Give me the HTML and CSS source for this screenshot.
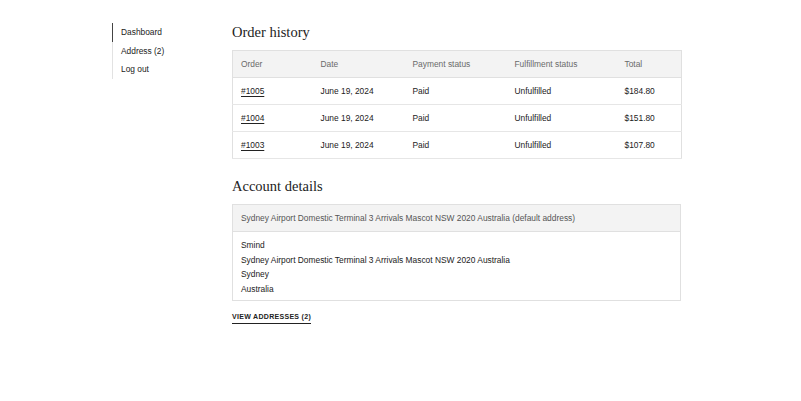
FILE: index.html
```html
<!DOCTYPE html>
<html>
<head>
<meta charset="utf-8">
<link rel="stylesheet" href="styles.css">
</head>
<body>
<div class="page">
  <nav class="side">
    <a class="side-link active" href="#">Dashboard</a>
    <a class="side-link" href="#">Address (2)</a>
    <a class="side-link" href="#">Log out</a>
  </nav>
  <main class="main">
    <h2 class="title">Order history</h2>
    <table class="orders">
      <colgroup>
        <col class="c1"><col class="c2"><col class="c3"><col class="c4"><col class="c5">
      </colgroup>
      <thead>
        <tr><th>Order</th><th>Date</th><th>Payment status</th><th>Fulfillment status</th><th>Total</th></tr>
      </thead>
      <tbody>
        <tr><td><a href="#">#1005</a></td><td>June 19, 2024</td><td>Paid</td><td>Unfulfilled</td><td>$184.80</td></tr>
        <tr><td><a href="#">#1004</a></td><td>June 19, 2024</td><td>Paid</td><td>Unfulfilled</td><td>$151.80</td></tr>
        <tr><td><a href="#">#1003</a></td><td>June 19, 2024</td><td>Paid</td><td>Unfulfilled</td><td>$107.80</td></tr>
      </tbody>
    </table>
    <h2 class="title title-2">Account details</h2>
    <div class="card">
      <div class="card-head">Sydney Airport Domestic Terminal 3 Arrivals Mascot NSW 2020 Australia (default address)</div>
      <div class="card-body">
        <p>Smind</p>
        <p>Sydney Airport Domestic Terminal 3 Arrivals Mascot NSW 2020 Australia</p>
        <p>Sydney</p>
        <p>Australia</p>
      </div>
    </div>
    <a class="view" href="#">VIEW ADDRESSES (2)</a>
  </main>
</div>
</body>
</html>
```
FILE: styles.css
```css
html, body { margin: 0; padding: 0; background: #fff; }
body { font-family: "Liberation Sans", Arial, sans-serif; font-size: 8.4px; color: #222; }
.page { display: flex; padding: 23px 0 0 112px; }
.side { width: 120px; display: flex; flex-direction: column; align-self: flex-start; box-sizing: border-box; }
.side-link { color: #222; text-decoration: none; font-size: 8.4px; line-height: 18.5px; height: 18.5px; padding-left: 8px; border-left: 1px solid #e2e2e2; }
.side-link.active { border-left-color: #444; }
.main { width: 449px; display: flex; flex-direction: column; align-items: flex-start; }
.title { font-family: "Liberation Serif", "Times New Roman", serif; font-weight: normal; font-size: 14.5px; margin: 0; line-height: 18px; color: #222; }
.orders { width: 449px; border-collapse: collapse; margin-top: 9px; border: 1px solid #e0e0e0; table-layout: fixed; }
.c1 { width: 80px; } .c2 { width: 92px; } .c3 { width: 102px; } .c4 { width: 110px; } .c5 { width: 65px; }
.orders th { background: #f3f3f3; color: #6a6a6a; font-weight: normal; text-align: left; height: 26px; padding: 0 0 0 8px; border-bottom: 1px solid #e0e0e0; }
.orders td { height: 26px; padding: 0 0 0 8px; border-bottom: 1px solid #e6e6e6; color: #222; }
.orders td a { color: #222; text-decoration: underline; text-underline-offset: 2px; }
.title-2 { margin-top: 18px; }
.card { width: 449px; box-sizing: border-box; border: 1px solid #e0e0e0; margin-top: 9px; }
.card-head { background: #f3f3f3; color: #555; height: 26px; line-height: 26px; padding-left: 8px; border-bottom: 1px solid #e0e0e0; }
.card-body { padding: 6px 8px 4px; }
.card-body p { margin: 0; line-height: 14.5px; }
.view { margin-top: 11px; color: #222; text-decoration: none; font-weight: bold; font-size: 7px; letter-spacing: 0.3px; border-bottom: 1px solid #222; padding-bottom: 2px; line-height: 9px; }
```
